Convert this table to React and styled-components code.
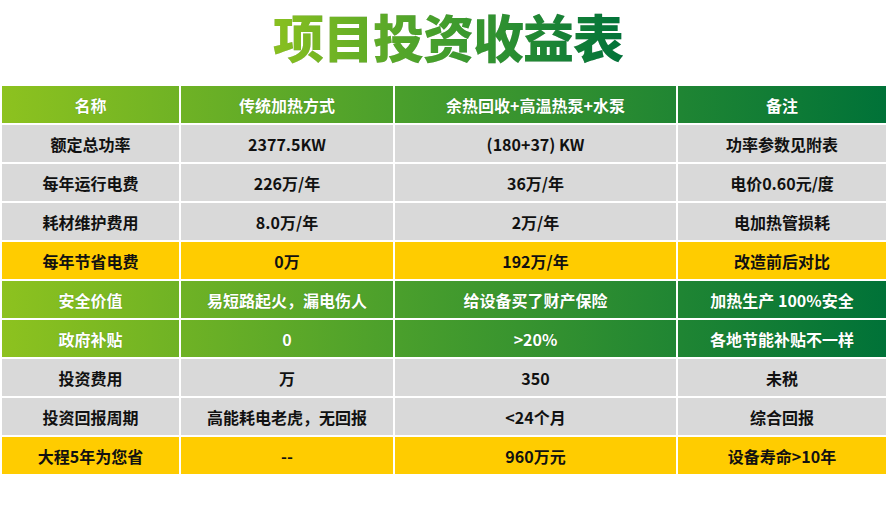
import styled, { createGlobalStyle, css } from "styled-components";

const GlobalStyle = createGlobalStyle`
  html, body {
    margin: 0;
    padding: 0;
    background: #ffffff;
  }
  body {
    font-family: "Noto Sans CJK SC", "Noto Sans", sans-serif;
  }
`;

const COLS = [177, 212, 281, 208];
const GAP = 2;
const TABLE_W = COLS.reduce((a, b) => a + b, 0) + GAP * (COLS.length - 1);

const GREEN = "linear-gradient(90deg, #8dc21f 0%, #4a9f2c 45%, #007238 100%)";

const rows = [
  { kind: "green", cells: ["名称", "传统加热方式", "余热回收+高温热泵+水泵", "备注"] },
  { kind: "gray", cells: ["额定总功率", "2377.5KW", "(180+37) KW", "功率参数见附表"] },
  { kind: "gray", cells: ["每年运行电费", "226万/年", "36万/年", "电价0.60元/度"] },
  { kind: "gray", cells: ["耗材维护费用", "8.0万/年", "2万/年", "电加热管损耗"] },
  { kind: "yellow", cells: ["每年节省电费", "0万", "192万/年", "改造前后对比"] },
  { kind: "green", cells: ["安全价值", "易短路起火，漏电伤人", "给设备买了财产保险", "加热生产 100%安全"] },
  { kind: "green", cells: ["政府补贴", "0", ">20%", "各地节能补贴不一样"] },
  { kind: "gray", cells: ["投资费用", "万", "350", "未税"] },
  { kind: "gray", cells: ["投资回报周期", "高能耗电老虎，无回报", "<24个月", "综合回报"] },
  { kind: "yellow", cells: ["大程5年为您省", "--", "960万元", "设备寿命>10年"] },
];

const Page = styled.div`
  width: 888px;
  display: flex;
  flex-direction: column;
  align-items: center;
`;

const TitleBar = styled.div`
  height: 86px;
  width: 100%;
  display: flex;
  justify-content: center;
  align-items: flex-start;
`;

const Title = styled.h1`
  margin: -2px 0 0;
  padding: 0 2px 0 10px;
  font-family: "Noto Sans CJK SC", sans-serif;
  font-weight: 900;
  font-size: 51px;
  line-height: 76px;
  letter-spacing: -1px;
  background: linear-gradient(90deg, #8dc21f 0%, #3c9a2e 55%, #00723a 100%);
  -webkit-background-clip: text;
  background-clip: text;
  color: transparent;
  filter: drop-shadow(0 0 0.6px rgba(0, 0, 0, 0.25));
`;

const Table = styled.div`
  display: grid;
  grid-template-columns: ${COLS.map((c) => c + "px").join(" ")};
  grid-auto-rows: 37px;
  gap: ${GAP}px;
  width: ${TABLE_W}px;
`;

const kindStyles = {
  green: css`
    background-image: ${GREEN};
    background-size: ${TABLE_W}px 100%;
    color: #ffffff;
    text-shadow: 0 0 1px rgba(0, 60, 0, 0.35);
  `,
  gray: css`
    background: #d9d9d9;
    color: #111111;
  `,
  yellow: css`
    background: #ffcc00;
    color: #111111;
  `,
};

const Cell = styled.div`
  display: flex;
  align-items: center;
  justify-content: center;
  font-size: 16px;
  font-weight: 700;
  white-space: nowrap;
  ${({ $kind }) => kindStyles[$kind]}
  background-position: ${({ $offset }) => -$offset}px 0;
`;

const offsets = COLS.map((_, i) =>
  COLS.slice(0, i).reduce((a, b) => a + b + GAP, 0)
);

export default function App() {
  return (
    <>
      <GlobalStyle />
      <Page>
        <TitleBar>
          <Title>项目投资收益表</Title>
        </TitleBar>
        <Table>
          {rows.map((row, r) =>
            row.cells.map((text, c) => (
              <Cell key={r + "-" + c} $kind={row.kind} $offset={offsets[c]}>
                {text}
              </Cell>
            ))
          )}
        </Table>
      </Page>
    </>
  );
}
